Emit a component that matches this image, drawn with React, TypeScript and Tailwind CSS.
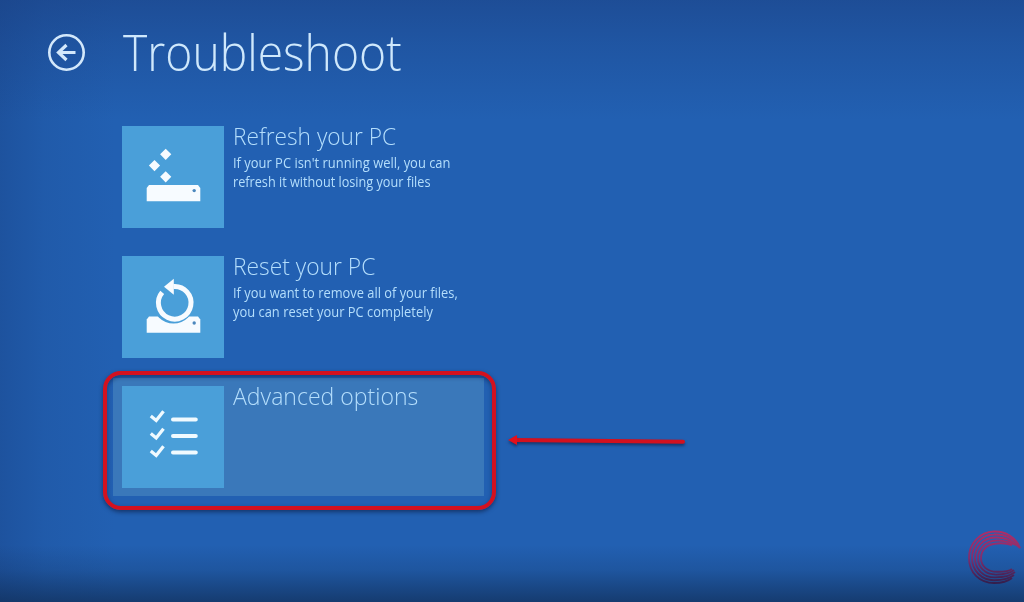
import type { ReactNode } from "react";
import { clsx } from "clsx";

type Option = {
  title: string;
  titleClass: string;
  lines: { text: string; className: string }[];
  icon: ReactNode;
  active?: boolean;
};

const OPTIONS: Option[] = [
  {
    title: "Refresh your PC",
    titleClass: "scale-x-[0.945]",
    lines: [
      { text: "If your PC isn't running well, you can", className: "scale-x-[0.923]" },
      { text: "refresh it without losing your files", className: "scale-x-[0.905]" },
    ],
    icon: <RefreshIcon />,
  },
  {
    title: "Reset your PC",
    titleClass: "scale-x-[0.95]",
    lines: [
      { text: "If you want to remove all of your files,", className: "scale-x-[0.918]" },
      { text: "you can reset your PC completely", className: "scale-x-[0.922]" },
    ],
    icon: <ResetIcon />,
  },
  {
    title: "Advanced options",
    titleClass: "scale-x-[0.96]",
    lines: [],
    icon: <ChecklistIcon />,
    active: true,
  },
];

export default function App() {
  return (
    <div className="relative h-[602px] w-[1024px] overflow-hidden bg-[#2260b2] bg-[linear-gradient(to_bottom,rgba(26,62,128,0.55)_0,rgba(26,62,128,0.3)_45px,transparent_120px,transparent_545px,rgba(16,44,84,0.2)_570px,rgba(16,44,84,0.7)_602px),linear-gradient(to_right,rgba(24,66,134,0.45)_0,rgba(24,66,134,0.18)_45px,transparent_115px)] font-['Open_Sans','Noto_Sans',sans-serif]">
      <header className="flex h-[118px] items-start pl-[47px]">
        <button type="button" aria-label="Back" className="mt-[33px]">
          <BackIcon />
        </button>
        <h1 className="ml-[38px] mt-[17px] origin-left scale-x-[0.925] whitespace-nowrap text-[50px] font-[330] leading-[70px] text-[#cfe8fc]">
          Troubleshoot
        </h1>
      </header>

      <main className="flex w-[484px] flex-col gap-3 pl-[113px]">
        {OPTIONS.map((option) => (
          <OptionRow key={option.title} option={option} />
        ))}
      </main>

      <Arrow />
      <BrandMark />
    </div>
  );
}

function OptionRow({ option }: { option: Option }) {
  return (
    <button
      type="button"
      className={clsx(
        "relative flex h-[118px] w-[371px] items-start pl-[9px] pt-2 text-left",
        option.active && "bg-[#3a78ba]",
      )}
    >
      <span className="h-[102px] w-[102px] shrink-0 bg-[#4a9fd9]">{option.icon}</span>
      <span className="-mt-2 ml-[9px] flex flex-col whitespace-nowrap text-[#b4defc]">
        <span
          className={clsx(
            "mb-0.5 mt-px origin-left text-2xl font-[340] leading-[33px]",
            option.titleClass,
          )}
        >
          {option.title}
        </span>
        {option.lines.map((line) => (
          <span
            key={line.text}
            className={clsx("origin-left text-sm leading-[18.5px]", line.className)}
          >
            {line.text}
          </span>
        ))}
      </span>
      {option.active && (
        <span className="absolute -left-2.5 -top-[7px] h-[139px] w-[393px] rounded-[18px] border-4 border-[#d3111f] shadow-[0_2px_4px_rgba(10,25,60,0.6),inset_0_2px_4px_rgba(10,25,60,0.5)]" />
      )}
    </button>
  );
}

function BackIcon() {
  return (
    <svg className="block h-[38px] w-[38px]" viewBox="0 0 38 38" fill="none" stroke="#d3e8fb">
      <circle cx="19.5" cy="19.5" r="17.2" strokeWidth="2.6" />
      <path d="M28.5 19.5H12" strokeWidth="3" />
      <path d="M19.5 12l-8 7.5 8 7.5" strokeWidth="3.2" />
    </svg>
  );
}

function RefreshIcon() {
  return (
    <svg className="block h-full w-full" viewBox="0 0 102 102" fill="#f7fbff">
      <path d="M43.7 22.7l5.6 5.6-5.6 5.6-5.6-5.6zM32.5 34l5.6 5.6-5.6 5.6-5.6-5.6zM43.7 45.2l5.6 5.6-5.6 5.6-5.6-5.6z" />
      <path d="M27 59h49l2.3 3v13.3H24.7V62z" />
      <circle cx="72.2" cy="64.6" r="1.7" fill="#4b87bd" />
    </svg>
  );
}

function ResetIcon() {
  return (
    <svg className="block h-full w-full" viewBox="0 0 102 102">
      <path d="M27 60.5h49l2.3 3v13.3H24.7V63.5z" fill="#f7fbff" />
      <circle cx="51.5" cy="46.8" r="20.7" fill="#4a9fd9" />
      <path
        d="M40.2 36.3A16.3 16.3 0 1 0 51.5 30.5"
        fill="none"
        stroke="#f7fbff"
        strokeWidth="5"
      />
      <path d="M42 30.8l9.8-8v16z" fill="#f7fbff" />
      <circle cx="72.2" cy="67" r="1.7" fill="#4b87bd" />
    </svg>
  );
}

function ChecklistIcon() {
  return (
    <svg className="block h-full w-full" viewBox="0 0 102 102" fill="none" stroke="#f0faff">
      {[0, 17.5, 35].map((y) => (
        <path key={y} d={`M28.8 ${30 + y}l5.4 4.5 7.3-9.3`} strokeWidth="3.3" />
      ))}
      <path
        d="M51 33.4h22.8M51 50h22.8M51 66.5h22.8"
        strokeWidth="4"
        strokeLinecap="round"
      />
    </svg>
  );
}

function Arrow() {
  return (
    <svg
      className="absolute left-[500px] top-[425px] h-[30px] w-[195px] drop-shadow-[0_2px_1.5px_rgba(10,25,60,0.6)]"
      viewBox="0 0 195 30"
    >
      <path d="M14 15l169 1.7" stroke="#d3111f" strokeWidth="4" strokeLinecap="round" />
      <path d="M8 15l9-5v10z" fill="#e5101a" />
    </svg>
  );
}

function BrandMark() {
  return (
    <svg
      className="absolute left-[964px] top-[526px] h-[64px] w-[60px]"
      viewBox="0 0 60 64"
      fill="none"
    >
      <defs>
        <linearGradient id="mark" x1="0" y1="4" x2="0" y2="60" gradientUnits="userSpaceOnUse">
          <stop offset="0" stopColor="#b02d66" />
          <stop offset="0.5" stopColor="#7d2f70" />
          <stop offset="1" stopColor="#2b1c48" />
        </linearGradient>
      </defs>
      <g stroke="url(#mark)" strokeWidth="1.9">
        <path d="M56 22C52 11 41 5 30 5.500C16 6 5 17 5 32C5 47 16 57 30 57C37 57 43 56 48 52" />
        <path d="M54 18C47 11 38 8 30 8.500C17 9 8 19 8 32C8 45 18 54.200 30 54.200C38 54.200 45 53 50 49" />
        <path d="M56 22C48 14 39 11 31 11.500C19 12 11 21 11 32C11 43 19 51.400 31 51.400C39 51.400 46 50 51 46" />
        <path d="M52 19C45 16 39 14 32 14.500C21 15 14 23 14 32C14 41 21 48.600 32 48.600C40 48.600 45 48 50 44" />
        <path d="M48 19C42 17 38 17 33 17.500C23 18 17 24 17 32C17 40 23 45.800 33 45.800C39 45.800 44 46 48 43" />
      </g>
    </svg>
  );
}
